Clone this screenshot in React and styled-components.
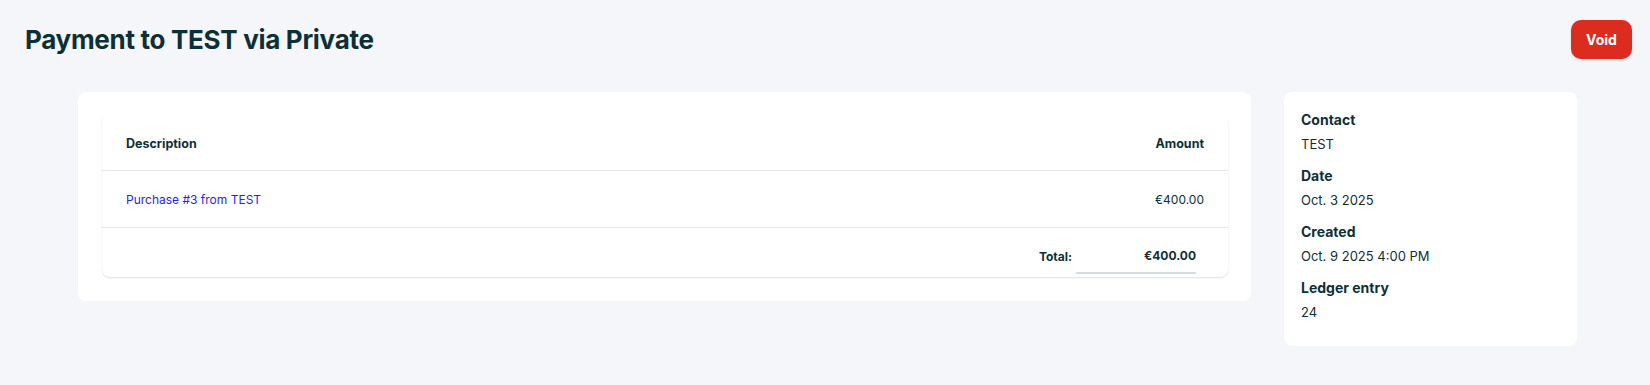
import styled, { createGlobalStyle } from "styled-components"

const GlobalStyle = createGlobalStyle`
  body {
    margin: 0;
    background: #f5f6fa;
    font-family: "Inter", "Noto Sans", sans-serif;
    color: #0f2f36;
  }
`

const lines = [{ description: "Purchase #3 from TEST", amount: "€400.00" }]

const details = [
  { label: "Contact", value: "TEST" },
  { label: "Date", value: "Oct. 3 2025" },
  { label: "Created", value: "Oct. 9 2025 4:00 PM" },
  { label: "Ledger entry", value: "24" },
]

export default function App() {
  return (
    <Page>
      <GlobalStyle />
      <Header>
        <Title>Payment to TEST via Private</Title>
        <VoidButton>Void</VoidButton>
      </Header>
      <Content>
        <MainCard>
          <Table>
            <thead>
              <tr>
                <HeadCell>Description</HeadCell>
                <HeadCell $right>Amount</HeadCell>
              </tr>
            </thead>
            <tbody>
              {lines.map((line) => (
                <tr key={line.description}>
                  <Cell>
                    <LineLink href="#">{line.description}</LineLink>
                  </Cell>
                  <Cell $right>{line.amount}</Cell>
                </tr>
              ))}
            </tbody>
            <tfoot>
              <tr>
                <FootCell colSpan={2}>
                  <TotalRow>
                    <TotalLabel>Total:</TotalLabel>
                    <TotalValue>€400.00</TotalValue>
                  </TotalRow>
                </FootCell>
              </tr>
            </tfoot>
          </Table>
        </MainCard>
        <SideCard>
          {details.map((item) => (
            <Detail key={item.label}>
              <DetailLabel>{item.label}</DetailLabel>
              <DetailValue>{item.value}</DetailValue>
            </Detail>
          ))}
        </SideCard>
      </Content>
    </Page>
  )
}

const Page = styled.div`
  min-height: 385px;
`

const Header = styled.div`
  display: flex;
  align-items: center;
  justify-content: space-between;
  padding: 20px 18px 0 25px;
  height: 39px;
`

const Title = styled.h1`
  margin: 0;
  font-size: 26px;
  font-weight: 700;
  letter-spacing: -0.3px;
  color: #0d3036;
`

const VoidButton = styled.button`
  width: 61px;
  height: 39px;
  border: none;
  border-radius: 10px;
  background: #dc2b1f;
  color: #ffffff;
  font-family: inherit;
  font-size: 14px;
  font-weight: 700;
  box-shadow: 0 1px 3px rgba(0, 0, 0, 0.12);
  cursor: pointer;
`

const Content = styled.div`
  display: flex;
  align-items: flex-start;
  gap: 33px;
  margin: 33px 73px 0 78px;
`

const MainCard = styled.div`
  flex: 1;
  background: #ffffff;
  border-radius: 8px;
  padding: 24px 23px 24px 24px;
`

const Table = styled.table`
  width: 100%;
  border-collapse: separate;
  border-spacing: 0;
  border-radius: 8px;
  box-shadow: 0 1px 2px rgba(20, 30, 60, 0.14);
  font-size: 12px;
`

const HeadCell = styled.th`
  text-align: ${(p) => (p.$right ? "right" : "left")};
  font-size: 12.5px;
  font-weight: 700;
  padding: 0 24px;
  height: 54px;
  border-bottom: 1px solid #e6e7ee;
  color: #0f2f36;
`

const Cell = styled.td`
  text-align: ${(p) => (p.$right ? "right" : "left")};
  padding: 0 24px;
  height: 56px;
  border-bottom: 1px solid #e6e7ee;
  color: #0f2f36;
`

const LineLink = styled.a`
  color: #2a1ff0;
  text-decoration: none;
`

const FootCell = styled.td`
  padding: 20px 32px 3px 24px;
`

const TotalRow = styled.div`
  display: flex;
  justify-content: flex-end;
  align-items: center;
  gap: 4px;
  font-size: 12px;
  font-weight: 700;
`

const TotalLabel = styled.span`
  padding-bottom: 9px;
`

const TotalValue = styled.span`
  width: 120px;
  text-align: right;
  padding-bottom: 9px;
  border-bottom: 2px solid #d6dce4;
`

const SideCard = styled.div`
  width: 259px;
  background: #ffffff;
  border-radius: 8px;
  padding: 18px 17px 12px;
`

const Detail = styled.div`
  display: flex;
  flex-direction: column;
  gap: 4px;
  margin-bottom: 12px;
`

const DetailLabel = styled.div`
  font-size: 14px;
  font-weight: 700;
  line-height: 20px;
`

const DetailValue = styled.div`
  font-size: 13px;
  line-height: 20px;
`
